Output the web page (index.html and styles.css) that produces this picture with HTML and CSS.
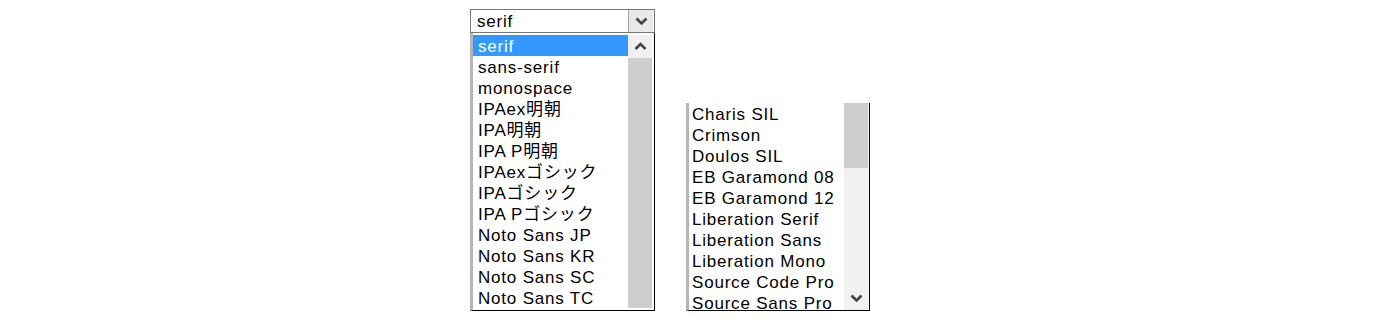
FILE: index.html
```html
<!DOCTYPE html>
<html lang="ja">
<head>
    <meta charset="UTF-8">
    <title>font list</title>
    <link rel="stylesheet" href="styles.css">
</head>
<body>
    <div class="page">
        <div class="picker">
            <div class="select">
                <span class="value">serif</span>
                <span class="btn">
                    <svg width="13" height="9" viewBox="0 0 13 9"><path d="M1.5 1.5 L6.5 6.5 L11.5 1.5" fill="none" stroke="#444" stroke-width="2.6"/></svg>
                </span>
            </div>
            <div class="list first">
                <ul class="items">
                    <li class="on">serif</li>
                    <li>sans-serif</li>
                    <li>monospace</li>
                    <li>IPAex明朝</li>
                    <li>IPA明朝</li>
                    <li>IPA P明朝</li>
                    <li>IPAexゴシック</li>
                    <li>IPAゴシック</li>
                    <li>IPA Pゴシック</li>
                    <li>Noto Sans JP</li>
                    <li>Noto Sans KR</li>
                    <li>Noto Sans SC</li>
                    <li>Noto Sans TC</li>
                </ul>
                <div class="bar">
                    <span class="arrow up">
                        <svg width="13" height="9" viewBox="0 0 13 9"><path d="M1.5 7 L6.5 2 L11.5 7" fill="none" stroke="#444" stroke-width="2.6"/></svg>
                    </span>
                    <span class="thumb long"></span>
                </div>
            </div>
        </div>

        <div class="list second">
            <ul class="items">
                <li>Charis SIL</li>
                <li>Crimson</li>
                <li>Doulos SIL</li>
                <li>EB Garamond 08</li>
                <li>EB Garamond 12</li>
                <li>Liberation Serif</li>
                <li>Liberation Sans</li>
                <li>Liberation Mono</li>
                <li>Source Code Pro</li>
                <li>Source Sans Pro</li>
            </ul>
            <div class="bar">
                <span class="thumb short"></span>
                <span class="track"></span>
                <span class="arrow down">
                    <svg width="13" height="9" viewBox="0 0 13 9"><path d="M1.5 1.5 L6.5 6.5 L11.5 1.5" fill="none" stroke="#444" stroke-width="2.6"/></svg>
                </span>
            </div>
        </div>
    </div>
</body>
</html>
```

FILE: styles.css
```css
* {
    padding: 0;
    margin: 0;
    box-sizing: border-box;
}

body {
    background: #fff;
    font: 17px "Liberation Sans", "Noto Sans CJK JP", sans-serif;
    letter-spacing: 0.8px;
    color: #000;
}

.page {
    display: flex;
    align-items: flex-start;
    padding: 9px 0 0 470px;
}

.picker {
    width: 185px;
}

.select {
    display: flex;
    align-items: center;
    height: 24px;
    border: 1px solid #767676;
    background: #fff;
}

.select .value {
    flex: 1;
    padding: 2px 0 0 6px;
    line-height: 20px;
}

.select .btn {
    display: flex;
    align-items: center;
    justify-content: center;
    width: 25px;
    height: 22px;
    margin-right: 1px;
    background: #e9e9e9;
    border-left: 1px solid #a0a0a0;
}

.list {
    display: flex;
    background: #fff;
    border-left: 3px solid #b4b4b4;
    border-right: 1px solid #000;
    border-bottom: 1px solid #000;
}

.list.first {
    height: 278px;
    padding: 2px 2px 2px 0;
}

.list.second {
    width: 184px;
    height: 208px;
    margin: 94px 0 0 31px;
    padding-right: 1px;
}

.items {
    flex: 1;
    list-style: none;
}

.items li {
    height: 21px;
    line-height: 19px;
    padding: 2px 0 0 5px;
    white-space: nowrap;
    overflow: hidden;
}

.second .items li {
    padding-left: 3px;
}

.items li.on {
    background: #3399ff;
    color: #fff;
}

.bar {
    display: flex;
    flex-direction: column;
    width: 24px;
    background: #f0f0f0;
}

.arrow {
    display: flex;
    align-items: center;
    justify-content: center;
    height: 23px;
    background: #f0f0f0;
}

.thumb {
    background: #cdcdcd;
}

.thumb.long {
    flex: 1;
}

.thumb.short {
    height: 65px;
}

.track {
    flex: 1;
}
```
